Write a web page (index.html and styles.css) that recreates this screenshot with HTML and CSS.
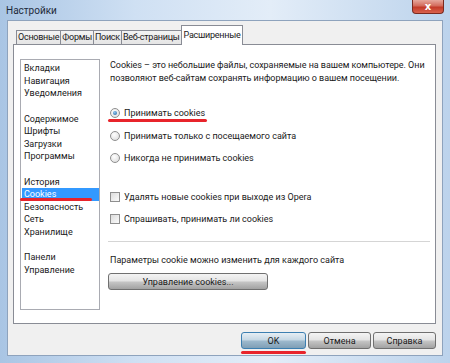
FILE: index.html
```html
<!DOCTYPE html>
<html lang="ru">
<head>
    <meta charset="UTF-8">
    <title>Настройки</title>
    <link rel="stylesheet" href="styles.css">
</head>
<body>
    <div class="window">
        <div class="titlebar">
            <span class="title">Настройки</span>
            <button class="close">x</button>
        </div>

        <div class="client">
            <div class="tabs">
                <div class="tab">Основные</div>
                <div class="tab">Формы</div>
                <div class="tab">Поиск</div>
                <div class="tab">Веб-страницы</div>
                <div class="tab active">Расширенные</div>
            </div>

            <div class="panel">
                <div class="nav">
                    <div class="nav-group">
                        <div class="nav-item">Вкладки</div>
                        <div class="nav-item">Навигация</div>
                        <div class="nav-item">Уведомления</div>
                    </div>
                    <div class="nav-group">
                        <div class="nav-item">Содержимое</div>
                        <div class="nav-item">Шрифты</div>
                        <div class="nav-item">Загрузки</div>
                        <div class="nav-item">Программы</div>
                    </div>
                    <div class="nav-group">
                        <div class="nav-item">История</div>
                        <div class="nav-item selected">Cookies</div>
                        <div class="nav-item">Безопасность</div>
                        <div class="nav-item">Сеть</div>
                        <div class="nav-item">Хранилище</div>
                    </div>
                    <div class="nav-group">
                        <div class="nav-item">Панели</div>
                        <div class="nav-item">Управление</div>
                    </div>
                </div>

                <div class="content">
                    <p class="intro">Cookies – это небольшие файлы, сохраняемые на вашем компьютере. Они позволяют веб-сайтам сохранять информацию о вашем посещении.</p>

                    <div class="options">
                        <label class="option"><span class="radio checked"></span>Принимать cookies</label>
                        <label class="option"><span class="radio"></span>Принимать только с посещаемого сайта</label>
                        <label class="option"><span class="radio"></span>Никогда не принимать cookies</label>
                    </div>

                    <div class="options checks">
                        <label class="option"><span class="check"></span>Удалять новые cookies при выходе из Opera</label>
                        <label class="option"><span class="check"></span>Спрашивать, принимать ли cookies</label>
                    </div>

                    <div class="separator"></div>

                    <p class="hint">Параметры cookie можно изменить для каждого сайта</p>
                    <button class="btn wide">Управление cookies...</button>
                </div>
            </div>

            <div class="actions">
                <button class="btn default">OK</button>
                <button class="btn">Отмена</button>
                <button class="btn">Справка</button>
            </div>
        </div>

        <!-- red marks drawn over the screenshot -->
        <div class="mark mark-cookies"></div>
        <div class="mark mark-radio"></div>
        <div class="mark mark-ok"></div>
    </div>
</body>
</html>
```

FILE: styles.css
```css
* {
    box-sizing: border-box;
}

body {
    margin: 0;
    font-family: Roboto, Arial, sans-serif;
    font-size: 9px;
    color: #1a1a1a;
}

.window {
    position: relative;
    width: 450px;
    height: 363px;
    display: flex;
    flex-direction: column;
    background: linear-gradient(to right, #a9c5e4, #cfe0f3 30%, #e3edf8 60%, #bcd3ec);
}

.titlebar {
    height: 20px;
    display: flex;
    align-items: flex-start;
    justify-content: space-between;
    padding-left: 6px;
}

.title {
    font-size: 10px;
    line-height: 22px;
    color: #1e2a3a;
}

.close {
    width: 32px;
    height: 14px;
    margin: 0 6px 0 0;
    border: 1px solid #7a2a20;
    border-top: none;
    border-radius: 0 0 4px 4px;
    background: linear-gradient(to bottom, #e6a79c, #d36b5c 45%, #c33a28 55%, #d9624d);
    color: #fff;
    font-family: "DejaVu Sans", sans-serif;
    font-size: 10px;
    font-weight: bold;
    line-height: 10px;
    padding: 0;
}

.client {
    flex: 1;
    margin: 0 7px 7px 7px;
    background: #f0f0f0;
    border: 1px solid #8ea3bd;
    padding: 4px 6px 0 5px;
    display: flex;
    flex-direction: column;
}

.tabs {
    display: flex;
    align-items: flex-end;
    height: 19px;
    padding-left: 3px;
}

.tab {
    height: 14px;
    line-height: 13px;
    padding: 0 1px;
    border: 1px solid #898c95;
    border-bottom: none;
    margin-right: -1px;
    letter-spacing: -0.25px;
    background: linear-gradient(to bottom, #f3f3f3, #e5e5e5);
}

.tab.active {
    height: 20px;
    line-height: 18px;
    padding: 0 2px;
    background: #fff;
    position: relative;
    z-index: 1;
    margin-bottom: -1px;
}

.panel {
    height: 280px;
    background: #fff;
    border: 1px solid #898c95;
    padding: 14px 5px 13px 6px;
    display: flex;
    gap: 10px;
}

.nav {
    width: 80px;
    border: 1px solid #a9abb2;
    padding: 2px 0 0 1px;
}

.nav-group {
    padding-bottom: 13px;
}

.nav-item {
    line-height: 12.5px;
    padding-left: 2px;
}

.nav-item.selected {
    background: #3399ff;
    color: #fff;
}

.content {
    flex: 1;
}

.intro {
    margin: 0;
    line-height: 12.5px;
    letter-spacing: -0.05px;
}

.options {
    display: flex;
    flex-direction: column;
    gap: 10px;
    margin-top: 23px;
}

.options.checks {
    margin-top: 26px;
}

.option {
    display: flex;
    align-items: center;
    line-height: 12.5px;
}

.radio {
    width: 10px;
    height: 10px;
    margin: 0 4px 0 0;
    border: 1px solid #8f8f8f;
    border-radius: 50%;
    background: radial-gradient(circle at 40% 35%, #ffffff, #d8d8d8);
    position: relative;
}

.radio.checked::after {
    content: "";
    position: absolute;
    left: 2px;
    top: 2px;
    width: 4px;
    height: 4px;
    border-radius: 50%;
    background: radial-gradient(circle at 40% 35%, #8fc6f0, #1d5e9c);
}

.check {
    width: 10px;
    height: 10px;
    margin: 0 4px 0 0;
    border: 1px solid #8f8f8f;
    background: linear-gradient(135deg, #dcdcdc, #fbfbfb);
}

.separator {
    height: 2px;
    background: #d5d5d5;
    border-bottom: 1px solid #fff;
    margin: 15px 0 11px -2px;
}

.hint {
    margin: 0;
    line-height: 12.5px;
}

.btn {
    height: 17px;
    padding: 0;
    border: 1px solid #707070;
    border-radius: 3px;
    background: linear-gradient(to bottom, #f4f4f4, #e4e4e4 45%, #c4c4c4 55%, #a2a2a2);
    font-family: Roboto, Arial, sans-serif;
    font-size: 9px;
    color: #1a1a1a;
    line-height: 14px;
}

.btn.wide {
    width: 160px;
    margin-top: 7px;
    margin-left: -2px;
}

.actions {
    display: flex;
    justify-content: flex-end;
    gap: 2px;
    margin-top: 8px;
}

.actions .btn {
    width: 63px;
}

.btn.default {
    width: 65px;
    border-color: #3c7fb1;
    background: linear-gradient(to bottom, #e6eef4, #c6d8e5 45%, #9cb8cc 55%, #7f9fb6);
}

.mark {
    position: absolute;
    height: 3px;
    border-radius: 2px;
    background: #e8242b;
}

.mark-cookies {
    left: 20px;
    top: 198px;
    width: 72px;
}

.mark-radio {
    left: 108px;
    top: 119px;
    width: 99px;
}

.mark-ok {
    left: 241px;
    top: 351px;
    width: 65px;
}
```
